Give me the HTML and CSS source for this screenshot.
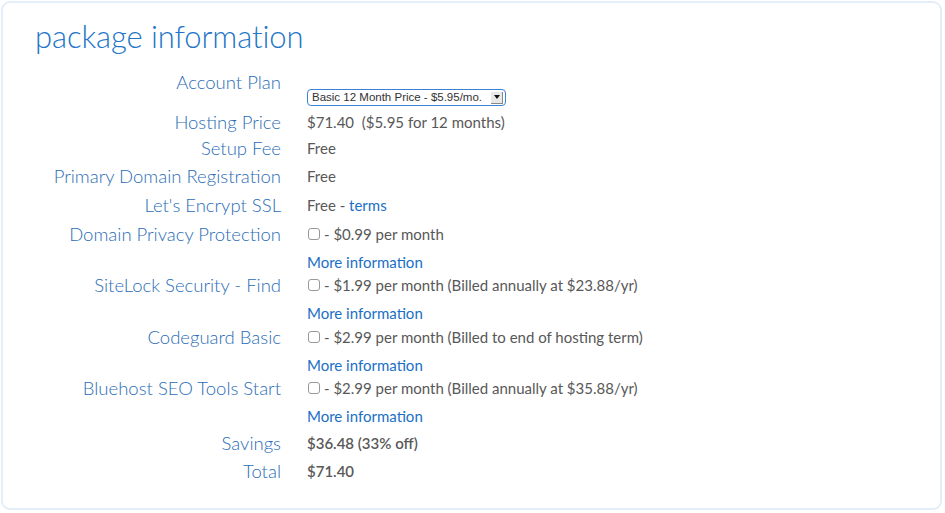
FILE: index.html
```html
<!DOCTYPE html>
<html>
<head>
<meta charset="utf-8">
<link rel="stylesheet" href="styles.css">
</head>
<body>
<div class="box">
  <h1 class="title">package information</h1>
  <div class="grid">
    <div class="label plan-label">Account Plan</div>
    <div class="value plan-value">
      <div class="select"><span class="select-text">Basic 12 Month Price - $5.95/mo.</span><span class="select-btn"><span class="tri"></span></span></div>
    </div>

    <div class="label r25">Hosting Price</div>
    <div class="value r25">$71.40&nbsp; ($5.95 for 12 months)</div>

    <div class="label r27">Setup Fee</div>
    <div class="value r27">Free</div>

    <div class="label r29">Primary Domain Registration</div>
    <div class="value r29">Free</div>

    <div class="label r29">Let's Encrypt SSL</div>
    <div class="value r29">Free - <a class="link">terms</a></div>

    <div class="label opt-label">Domain Privacy Protection</div>
    <div class="value opt-value"><div class="opt"><span class="cb"></span> - $0.99 per month</div><a class="link more">More information</a></div>

    <div class="label opt-label">SiteLock Security - Find</div>
    <div class="value opt-value"><div class="opt"><span class="cb"></span> - $1.99 per month (Billed annually at $23.88/yr)</div><a class="link more">More information</a></div>

    <div class="label opt-label">Codeguard Basic</div>
    <div class="value opt-value"><div class="opt"><span class="cb"></span> - $2.99 per month (Billed to end of hosting term)</div><a class="link more">More information</a></div>

    <div class="label opt-label">Bluehost SEO Tools Start</div>
    <div class="value opt-value"><div class="opt"><span class="cb"></span> - $2.99 per month (Billed annually at $35.88/yr)</div><a class="link more">More information</a></div>

    <div class="label savings">Savings</div>
    <div class="value strong savings">$36.48 (33% off)</div>

    <div class="label">Total</div>
    <div class="value strong">$71.40</div>
  </div>
</div>
</body>
</html>
```
FILE: styles.css
```css
html, body {
  margin: 0;
  padding: 0;
  background: #ffffff;
}
body {
  font-family: Lato, "Open Sans", sans-serif;
}
.box {
  margin: 1px 0 0 1px;
  width: 941px;
  height: 509px;
  box-sizing: border-box;
  border: 2px solid #e3eefa;
  border-radius: 9px;
  padding: 15px 0 0 32px;
}
.title {
  margin: 0;
  font-weight: 300;
  font-size: 31px;
  line-height: 36px;
  color: #2174c7;
  letter-spacing: -0.1px;
}
.grid {
  display: grid;
  grid-template-columns: 246px 1fr;
  column-gap: 26px;
  margin-top: 14px;
}
.label {
  text-align: right;
  font-size: 18.5px;
  font-weight: 300;
  line-height: 28px;
  color: #2b6db6;
  white-space: nowrap;
}
.value {
  font-size: 15px;
  line-height: 28px;
  color: #585858;
  white-space: nowrap;
}
.r25 { line-height: 25px; }
.r27 { line-height: 27px; }
.r29 { line-height: 29px; }
.plan-label {
  line-height: 28px;
  height: 42px;
}
.plan-value {
  padding-top: 21px;
  height: 42px;
  box-sizing: border-box;
}
.select {
  display: flex;
  align-items: center;
  width: 199px;
  height: 17px;
  box-sizing: border-box;
  border: 1px solid #3b82d4;
  border-radius: 4px;
  background: #fff;
  font-family: "Liberation Sans", Arial, sans-serif;
  font-size: 11.5px;
  color: #333;
  padding: 0 2px 0 4px;
}
.select-text {
  flex: 1;
  line-height: 15px;
}
.select-btn {
  width: 11px;
  height: 11px;
  background: #e8e8e8;
  border-right: 1px solid #888;
  border-bottom: 1px solid #888;
  display: flex;
  align-items: center;
  justify-content: center;
}
.tri {
  width: 0;
  height: 0;
  border-left: 3px solid transparent;
  border-right: 3px solid transparent;
  border-top: 4px solid #111;
}
.opt-label {
  padding-top: 1.5px;
  line-height: 24px;
}
.opt-value {
  padding-top: 1.5px;
}
.opt {
  line-height: 24px;
  display: flex;
  align-items: center;
}
.cb {
  display: inline-block;
  width: 10px;
  height: 10px;
  border: 1px solid #999;
  border-radius: 3px;
  margin-right: 4px;
  margin-left: 1px;
  background: #fff;
}
.link {
  color: #1a6fc6;
  text-decoration: none;
}
.more {
  display: block;
  margin-top: 6px;
  line-height: 20px;
}
.savings {
  padding-top: 2.5px;
}
.strong {
  font-weight: 600;
  color: #595959;
}
```
